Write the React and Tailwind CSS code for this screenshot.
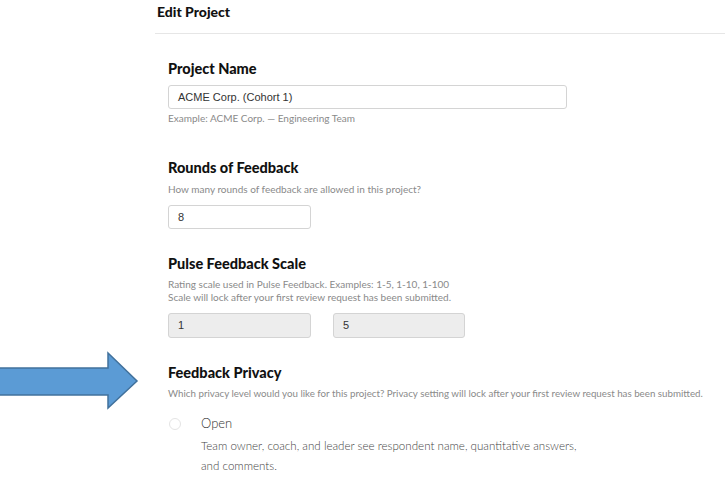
import React from "react";

const head = "font-['Lato',sans-serif] font-black text-[14.5px] leading-[18px] text-[#111]";
const help = "font-['Lato',sans-serif] text-[10px] leading-[14px] text-[#8a8a8a]";
const inputCls = "h-[24px] rounded-[3px] border border-[#d4d4d4] px-[9px] flex items-center font-['Liberation_Sans',Arial,sans-serif] text-[11px] text-[#333]";

export default function App() {
  return (
    <div className="relative w-[725px] h-[483px] overflow-hidden bg-white">
      <div className="ml-[155px] h-[34px] border-b border-[#e6e6e6] pl-[2px] pt-[3px]">
        <div className="font-['Lato',sans-serif] font-black text-[14px] leading-[18px] text-[#111]">Edit Project</div>
      </div>
      <div className="pl-[168px] flex flex-col">
        <div className={`${head} mt-[26px]`}>Project Name</div>
        <div className={`${inputCls} mt-[7px] w-[399px]`}>ACME Corp. (Cohort 1)</div>
        <div className={`${help} mt-[2px]`}>Example: ACME Corp. — Engineering Team</div>

        <div className={`${head} mt-[34px]`}>Rounds of Feedback</div>
        <div className={`${help} mt-[5px]`}>How many rounds of feedback are allowed in this project?</div>
        <div className={`${inputCls} mt-[9px] w-[143px]`}>8</div>

        <div className={`${head} mt-[26px]`}>Pulse Feedback Scale</div>
        <div className={`${help} !leading-[13px] mt-[5px]`}>
          <div>Rating scale used in Pulse Feedback. Examples: 1-5, 1-10, 1-100</div>
          <div>Scale will lock after your first review request has been submitted.</div>
        </div>
        <div className="mt-[9px] flex gap-[22px]">
          <div className={`${inputCls} !h-[25px] w-[143px] bg-[#ededed]`}>1</div>
          <div className={`${inputCls} !h-[25px] w-[132px] bg-[#ededed]`}>5</div>
        </div>

        <div className={`${head} mt-[26px]`}>Feedback Privacy</div>
        <div className={`${help} !text-[9.75px] mt-[4px] whitespace-nowrap`}>
          Which privacy level would you like for this project? Privacy setting will lock after your first review request has been submitted.
        </div>
        <div className="mt-[14px] flex items-center h-[18px]">
          <div className="w-[12px] h-[12px] rounded-full border border-[#e4e4e4] ml-[1px] mt-[2px]" />
          <div className="ml-[20px] font-['Lato',sans-serif] font-light text-[13px] leading-[18px] text-[#333]">Open</div>
        </div>
        <div className="mt-[4px] pl-[33px] w-[460px] font-['Lato',sans-serif] font-light text-[11.6px] leading-[20px] text-[#444]">
          Team owner, coach, and leader see respondent name, quantitative answers,
          <br />
          and comments.
        </div>
      </div>

      <svg className="absolute left-0 top-[350px]" width="140" height="62" viewBox="0 0 140 62">
        <polygon
          points="-2,18 108,18 108,3 137,31 108,58 108,45 -2,45"
          fill="#5b9bd5"
          stroke="#41719c"
          strokeWidth="1.5"
          strokeLinejoin="miter"
        />
      </svg>
    </div>
  );
}
